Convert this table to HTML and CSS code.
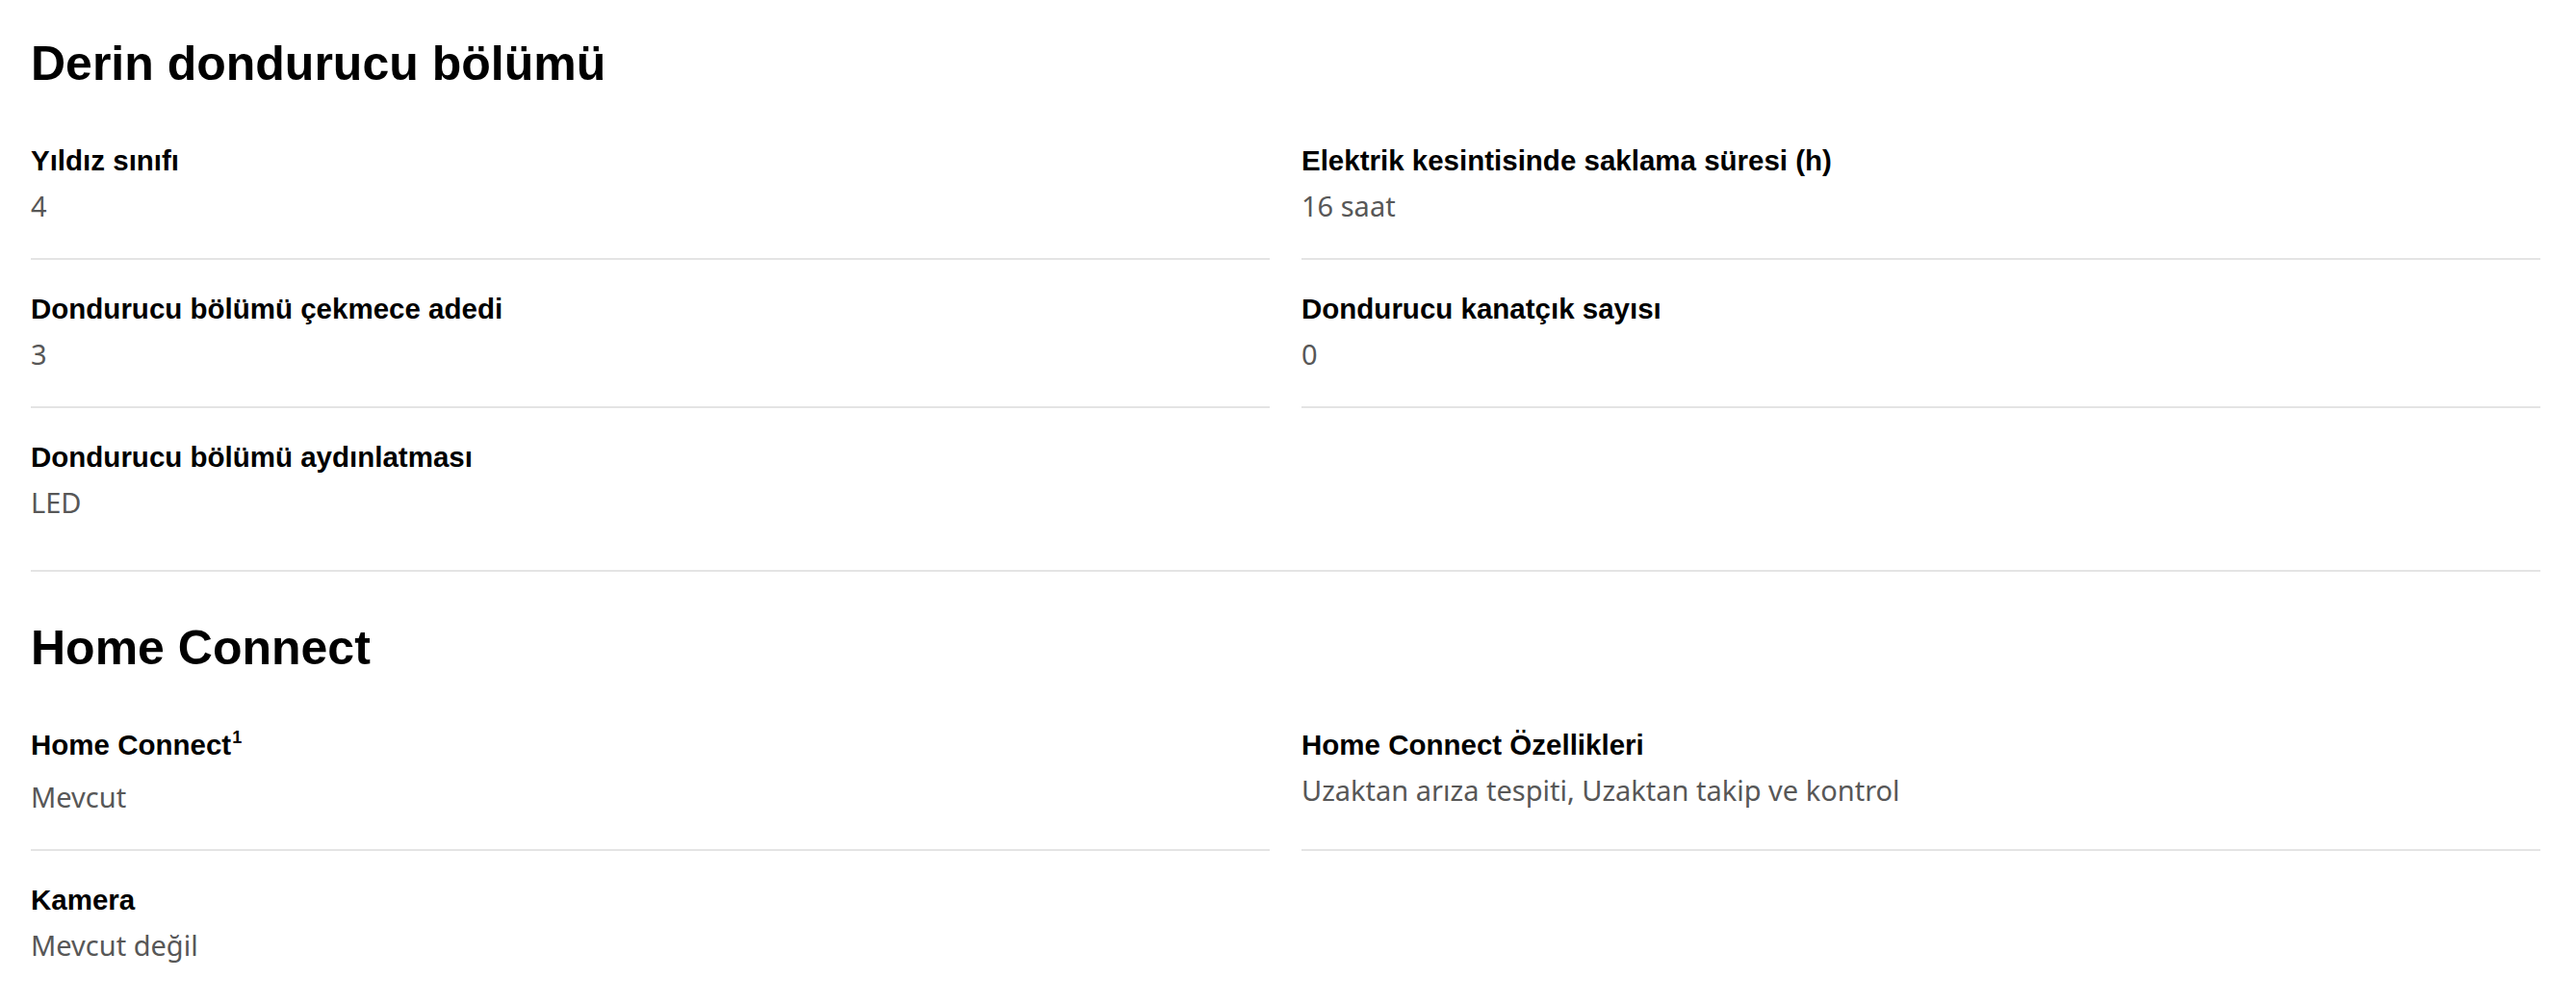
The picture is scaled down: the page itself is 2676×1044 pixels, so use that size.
FILE: index.html
```html
<!DOCTYPE html>
<html lang="tr">
<head>
<meta charset="utf-8">
<title>Teknik özellikler</title>
<link rel="stylesheet" href="styles.css">
</head>
<body>
<main class="specs">
  <section class="spec-section spec-section--bordered">
    <h2 class="spec-title">Derin dondurucu bölümü</h2>
    <dl class="spec-grid">
      <div class="spec-item">
        <dt class="spec-label">Yıldız sınıfı</dt>
        <dd class="spec-value">4</dd>
      </div>
      <div class="spec-item">
        <dt class="spec-label">Elektrik kesintisinde saklama süresi (h)</dt>
        <dd class="spec-value">16 saat</dd>
      </div>
      <div class="spec-item">
        <dt class="spec-label">Dondurucu bölümü çekmece adedi</dt>
        <dd class="spec-value">3</dd>
      </div>
      <div class="spec-item">
        <dt class="spec-label">Dondurucu kanatçık sayısı</dt>
        <dd class="spec-value">0</dd>
      </div>
      <div class="spec-item spec-item--last">
        <dt class="spec-label">Dondurucu bölümü aydınlatması</dt>
        <dd class="spec-value">LED</dd>
      </div>
    </dl>
  </section>
  <section class="spec-section spec-section--next">
    <h2 class="spec-title">Home Connect</h2>
    <dl class="spec-grid">
      <div class="spec-item">
        <dt class="spec-label spec-label--fn">Home Connect<sup class="footnote">1</sup></dt>
        <dd class="spec-value">Mevcut</dd>
      </div>
      <div class="spec-item">
        <dt class="spec-label">Home Connect Özellikleri</dt>
        <dd class="spec-value">Uzaktan arıza tespiti, Uzaktan takip ve kontrol</dd>
      </div>
      <div class="spec-item spec-item--last">
        <dt class="spec-label">Kamera</dt>
        <dd class="spec-value">Mevcut değil</dd>
      </div>
    </dl>
  </section>
</main>
</body>
</html>
```
FILE: styles.css
```css
html, body {
  margin: 0;
  padding: 0;
  background: #ffffff;
}

body {
  font-family: "Liberation Sans", Arial, sans-serif;
  color: #000000;
}

.specs {
  padding: 36px 37px 0 32px;
}

.spec-section--bordered {
  padding-bottom: 16px;
  border-bottom: 2px solid #e4e4e4;
}

.spec-section--next {
  padding-top: 49px;
}

.spec-title {
  margin: 0 0 20px;
  font-family: "Liberation Sans", Arial, sans-serif;
  font-weight: 700;
  font-size: 50px;
  line-height: 60px;
  color: #000;
}

.spec-grid {
  margin: 0;
  display: grid;
  grid-template-columns: 1fr 1fr;
  column-gap: 33px;
}

.spec-item {
  padding: 33px 0 36px;
  border-bottom: 2px solid #e4e4e4;
}

.spec-item--last {
  border-bottom: none;
}

.spec-label {
  margin: 0;
  font-family: "Liberation Sans", Arial, sans-serif;
  font-weight: 700;
  font-size: 29.5px;
  line-height: 36px;
  color: #000;
}

.spec-label--fn {
  padding-bottom: 7px;
}

.footnote {
  font-size: 18px;
  line-height: 0;
  vertical-align: 12px;
  margin-left: 1px;
}

.spec-value {
  margin: 11px 0 0;
  font-family: "Noto Sans", sans-serif;
  font-weight: 400;
  font-size: 29px;
  line-height: 36px;
  color: #575757;
}
```
